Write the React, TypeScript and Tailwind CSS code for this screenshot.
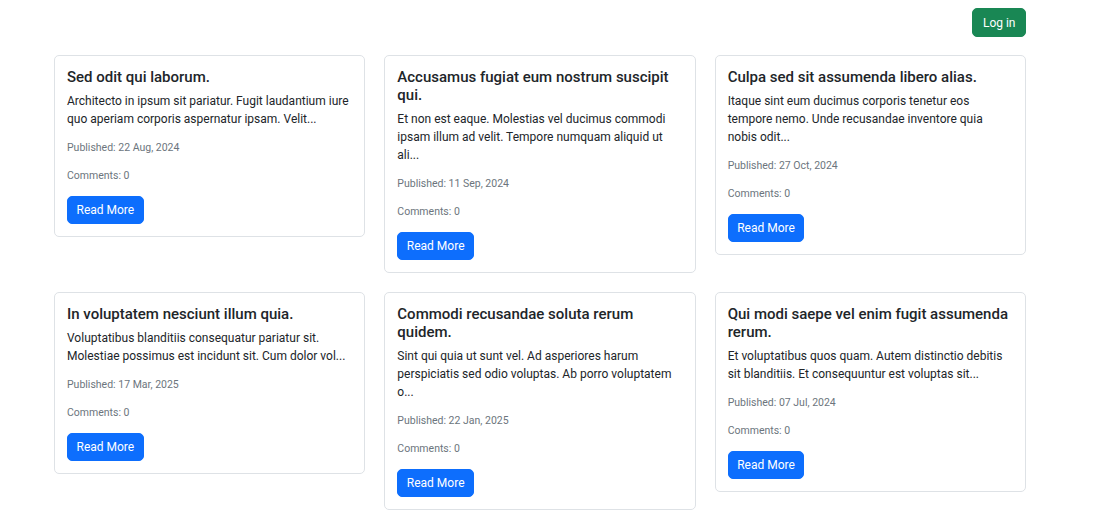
const posts = [
  {
    title: 'Sed odit qui laborum.',
    body: 'Architecto in ipsum sit pariatur. Fugit laudantium iure quo aperiam corporis aspernatur ipsam. Velit...',
    published: '22 Aug, 2024',
  },
  {
    title: 'Accusamus fugiat eum nostrum suscipit qui.',
    body: 'Et non est eaque. Molestias vel ducimus commodi ipsam illum ad velit. Tempore numquam aliquid ut ali...',
    published: '11 Sep, 2024',
  },
  {
    title: 'Culpa sed sit assumenda libero alias.',
    body: 'Itaque sint eum ducimus corporis tenetur eos tempore nemo. Unde recusandae inventore quia nobis odit...',
    published: '27 Oct, 2024',
  },
  {
    title: 'In voluptatem nesciunt illum quia.',
    body: 'Voluptatibus blanditiis consequatur pariatur sit. Molestiae possimus est incidunt sit. Cum dolor vol...',
    published: '17 Mar, 2025',
  },
  {
    title: 'Commodi recusandae soluta rerum quidem.',
    body: 'Sint qui quia ut sunt vel. Ad asperiores harum perspiciatis sed odio voluptas. Ab porro voluptatem o...',
    published: '22 Jan, 2025',
  },
  {
    title: 'Qui modi saepe vel enim fugit assumenda rerum.',
    body: 'Et voluptatibus quos quam. Autem distinctio debitis sit blanditiis. Et consequuntur est voluptas sit...',
    published: '07 Jul, 2024',
  },
];

const PostCard = ({ title, body, published }: { title: string; body: string; published: string }) => (
  <div className="bg-white border border-[#dee2e6] rounded-[5px] p-[12px]">
    <h5 className="text-[15px] leading-[18px] font-medium text-[#212529] mb-[6px]">{title}</h5>
    <p className="text-[12px] leading-[18px] text-[#212529] mb-[12px]">{body}</p>
    <p className="text-[10.5px] leading-[16px] text-[#6c757d] mb-[12px]">Published: {published}</p>
    <p className="text-[10.5px] leading-[16px] text-[#6c757d] mb-[12px]">Comments: 0</p>
    <button className="bg-[#0d6efd] text-white text-[12px] leading-[18px] px-[8.5px] py-[4px] border border-[#0d6efd] rounded-[5px]">
      Read More
    </button>
  </div>
);

export default function App() {
  return (
    <div className="min-h-screen bg-white" style={{ fontFamily: 'Roboto, "Liberation Sans", sans-serif' }}>
      <div className="w-[972px] ml-[54px] pt-[8px]">
        <div className="flex justify-end mb-[18px]">
          <button className="bg-[#198754] text-white text-[12px] leading-[18px] px-[9.5px] py-[4.5px] border border-[#198754] rounded-[5px]">
            Log in
          </button>
        </div>
        <div className="grid grid-cols-3 gap-[19px] items-start">
          {posts.map((p, i) => (
            <PostCard key={i} {...p} />
          ))}
        </div>
      </div>
    </div>
  );
}
